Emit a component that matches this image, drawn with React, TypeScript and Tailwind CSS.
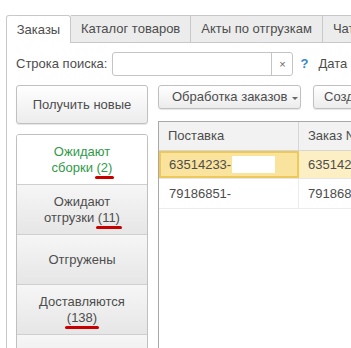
const Mark = ({ children }: { children: React.ReactNode }) => (
  <span className="relative">
    {children}
    <span className="absolute -left-[2px] -right-[2px] -bottom-[4px] h-[3px] rounded-full bg-[#c80000]" />
  </span>
);

const tabs = ["Каталог товаров", "Акты по отгрузкам", "Чат"];

const statuses = [
  { top: "Ожидают", bottom: <>сборки <Mark>(2)</Mark></>, active: true },
  { top: "Ожидают", bottom: <>отгрузки <Mark>(11)</Mark></> },
  { top: "Отгружены" },
  { top: "Доставляются", bottom: <Mark>(138)</Mark> },
  { top: "Доставлены" },
];

export default function App() {
  return (
    <div
      className="h-[348px] w-[351px] overflow-hidden bg-white text-[13px] text-[#4d4d4d]"
      style={{ fontFamily: '"Liberation Sans", Arial, sans-serif' }}
    >
      <div className="flex pt-[15px] pl-[6px]">
        <div className="flex h-[28px] w-[65px] shrink-0 items-center justify-center rounded-t-[3px] border border-b-0 border-[#c8c8c8] bg-white">
          Заказы
        </div>
        {tabs.map((t) => (
          <div
            key={t}
            className="flex h-[28px] shrink-0 items-center border-y border-r border-[#c8c8c8] bg-[#ececec] px-[10px] whitespace-nowrap"
          >
            {t}
          </div>
        ))}
      </div>

      <div className="h-full border-l border-[#c8c8c8] ml-[6px] pl-[9px] pt-[9px]">
        <div className="flex h-[24px] items-center whitespace-nowrap">
          <span className="shrink-0">Строка поиска:</span>
          <div className="ml-[5px] flex h-[24px] w-[181px] shrink-0 rounded-[3px] border border-[#c4c4c4] bg-white">
            <div className="flex-1" />
            <div className="flex w-[21px] items-center justify-center border-l border-[#c4c4c4] text-[11px] text-[#666]">
              ×
            </div>
          </div>
          <span className="ml-[7px] shrink-0 font-bold text-[#3b87c4]">?</span>
          <span className="ml-[10px] shrink-0">Дата загрузки</span>
        </div>

        <div className="mt-[9px] flex gap-[10px]">
          <div className="w-[132px] shrink-0">
            <div className="flex h-[39px] items-center justify-center rounded-[3px] border border-[#c0c0c0] bg-gradient-to-b from-white to-[#ececec] shadow-[0_1px_1px_rgba(0,0,0,0.1)]">
              Получить новые
            </div>
            <div className="mt-[10px] overflow-hidden rounded-t-[3px] border border-[#c0c0c0]">
              {statuses.map((s, i) => (
                <div
                  key={i}
                  className={`flex h-[50px] flex-col items-center justify-center border-b border-[#cfcfcf] leading-[16px] ${
                    s.active
                      ? "bg-white text-[#2f9a48]"
                      : "bg-gradient-to-b from-[#f6f6f6] to-[#e6e6e6]"
                  }`}
                >
                  <span>{s.top}</span>
                  {s.bottom && <span>{s.bottom}</span>}
                </div>
              ))}
            </div>
          </div>

          <div className="min-w-0 flex-1">
            <div className="flex gap-[12px] whitespace-nowrap">
              <div className="flex h-[24px] w-[143px] shrink-0 items-center gap-[5px] rounded-[3px] border border-[#c0c0c0] bg-gradient-to-b from-white to-[#ececec] pl-[13px] shadow-[0_1px_1px_rgba(0,0,0,0.1)]">
                Обработка заказов
                <span className="mt-[2px] border-x-[3px] border-t-[3px] border-x-transparent border-t-[#666]" />
              </div>
              <div className="flex h-[24px] shrink-0 items-center rounded-[3px] border border-[#c0c0c0] bg-gradient-to-b from-white to-[#ececec] px-[10px] shadow-[0_1px_1px_rgba(0,0,0,0.1)]">
                Создать
              </div>
            </div>

            <div className="mt-[12px] h-[240px] border-t border-l border-[#a8a8a8] whitespace-nowrap">
              <div className="flex h-[29px] border-b border-[#d6d6d6] bg-[#f2f2f2]">
                <div className="flex w-[140px] shrink-0 items-center border-r border-[#d6d6d6] pl-[9px]">
                  Поставка
                </div>
                <div className="flex items-center pl-[9px]">Заказ №</div>
              </div>
              <div className="flex h-[28px] border-b border-[#e6e6e6] bg-[#fcefc4]">
                <div className="flex w-[140px] shrink-0 items-center border-2 border-[#ecc95a] bg-[#fae39c] pl-[8px]">
                  63514233-
                  <span className="ml-[1px] h-[17px] w-[43px] bg-white" />
                </div>
                <div className="flex items-center pl-[9px]">63514233</div>
              </div>
              <div className="flex h-[30px] border-b border-[#ececec]">
                <div className="flex w-[140px] shrink-0 items-center border-r border-[#ececec] pl-[10px]">
                  79186851-
                </div>
                <div className="flex items-center pl-[9px]">79186851</div>
              </div>
            </div>
          </div>
        </div>
      </div>
    </div>
  );
}
